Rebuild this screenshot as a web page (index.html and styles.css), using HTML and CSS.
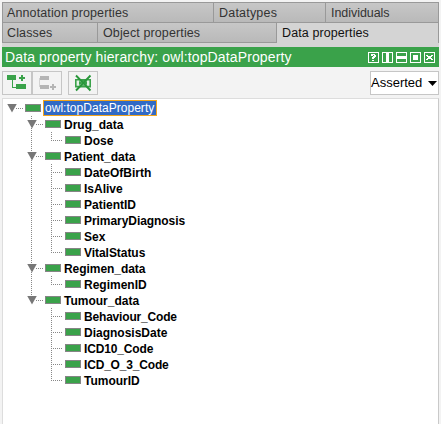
FILE: index.html
```html
<!DOCTYPE html>
<html lang="en">
<head><meta charset="utf-8"><title>Data properties</title><link rel="stylesheet" href="styles.css"></head>
<body>
<main class="window">
  <nav class="tabs">
    <div class="tab-row top"><span class="tab t1">Annotation properties</span><span class="tab t2">Datatypes</span><span class="tab t3">Individuals</span></div>
    <div class="tab-row bottom"><span class="tab t4">Classes</span><span class="tab t5">Object properties</span><span class="tab selected">Data properties</span></div>
  </nav>
  <header class="title"><span class="title-text">Data property hierarchy: owl:topDataProperty</span>
    <svg class="controls" width="67" height="11" viewBox="0 0 67 11" shape-rendering="crispEdges" fill="none" stroke="#fff">
      <path d="M.5.5h10v10H.5zM14.5.5h10v10h-10zM28.5.5h10v10h-10zM42.5.5h10v10h-10zM56.5.5h10v10h-10z"/>
      <path fill="#fff" stroke="none" d="M3 2h4v1h1v2H7v1H6v1H4V5h1V4h1V3H5v1H3zM4 8h2v1H4zM18 1h3v9h-3zM29 4h9v3h-9zM45 3h5v5h-5zM58 3h2v1h3V3h2v1h-1v1h-1v1h1v1h1v1h-2V7h-3v1h-2V7h1V6h1V5h-1V4h-1z"/>
    </svg>
  </header>
  <div class="toolbar">
    <button class="tool"><svg width="20" height="18" viewBox="0 0 20 18" shape-rendering="crispEdges"><path fill="#3aa24a" d="M0 1h9v5H0zM9 10h10v5H9zM5 6h1v7h3v1H5zM14 1h2v2h2v2h-2v2h-2V5h-2V3h2z"/></svg></button>
    <button class="tool add-sibling"><svg width="20" height="18" viewBox="0 0 20 18" shape-rendering="crispEdges"><path fill="#b5b5b5" d="M3 2h9v4H3zM3 11h9v4H3zM15 10h2v2h2v2h-2v2h-2v-2h-2v-2h2z"/><path fill="#d2d2d2" d="M2 4h1v9H2z"/></svg></button>
    <button class="tool remove"><svg width="20" height="18" viewBox="0 0 20 18"><path fill="#e5f2e7" stroke="#3aa24a" stroke-width="1.6" d="M2.800 5.800h14.400v6.800H2.800z"/><path fill="#3aa24a" d="M7 6l3 2 3-2zM7 13l3-2 3 2zM6 7l4 2-4 2zM14 7l-4 2 4 2z"/><path stroke="#28963a" stroke-width="1.900" d="M3 1.500l14.500 15M17.500 1.500L3 16.500"/></svg></button>
    <button class="select"><span>Asserted</span><svg width="9" height="5" viewBox="0 0 9 5"><path d="M0 0h9L4.500 5z"/></svg></button>
  </div>
  <section class="tree">
    <div class="row root"><i class="arrow"></i><i class="link"></i><i class="swatch"></i><span class="label">owl:topDataProperty</span></div>
    <div class="groups">
      <div class="row"><i class="arrow"></i><i class="link"></i><i class="swatch"></i><span class="label drug">Drug_data</span></div>
      <div class="children"><div class="row child"><i class="link"></i><i class="swatch"></i><span class="label dose">Dose</span></div></div>
      <div class="row"><i class="arrow"></i><i class="link"></i><i class="swatch"></i><span class="label patient">Patient_data</span></div>
      <div class="children">
        <div class="row child"><i class="link"></i><i class="swatch"></i><span class="label birth">DateOfBirth</span></div>
        <div class="row child"><i class="link"></i><i class="swatch"></i><span class="label alive">IsAlive</span></div>
        <div class="row child"><i class="link"></i><i class="swatch"></i><span class="label pid">PatientID</span></div>
        <div class="row child"><i class="link"></i><i class="swatch"></i><span class="label primary">PrimaryDiagnosis</span></div>
        <div class="row child"><i class="link"></i><i class="swatch"></i><span class="label sex">Sex</span></div>
        <div class="row child"><i class="link"></i><i class="swatch"></i><span class="label vital">VitalStatus</span></div>
      </div>
      <div class="row"><i class="arrow"></i><i class="link"></i><i class="swatch"></i><span class="label regimen">Regimen_data</span></div>
      <div class="children"><div class="row child"><i class="link"></i><i class="swatch"></i><span class="label rid">RegimenID</span></div></div>
      <div class="row"><i class="arrow"></i><i class="link"></i><i class="swatch"></i><span class="label tumour">Tumour_data</span></div>
      <div class="children">
        <div class="row child"><i class="link"></i><i class="swatch"></i><span class="label behaviour">Behaviour_Code</span></div>
        <div class="row child"><i class="link"></i><i class="swatch"></i><span class="label diagnosis">DiagnosisDate</span></div>
        <div class="row child"><i class="link"></i><i class="swatch"></i><span class="label icd10">ICD10_Code</span></div>
        <div class="row child"><i class="link"></i><i class="swatch"></i><span class="label icdo">ICD_O_3_Code</span></div>
        <div class="row child"><i class="link"></i><i class="swatch"></i><span class="label tid">TumourID</span></div>
      </div>
    </div>
  </section>
</main>
</body>
</html>
```
FILE: styles.css
```css
* { box-sizing: border-box; }
body { margin: 0; background: #f3f3f3; font-family: "Liberation Sans", Arial, sans-serif; color: #000; overflow: hidden; }
.window { width: 437px; height: 424px; margin-left: 2px; padding-top: 2px; display: flex; flex-direction: column; }
.tabs { height: 45px; background: #d4d4d4; border-top: 1px solid #999; }
.tab-row { display: flex; height: 20px; border-left: 1px solid #999; border-right: 1px solid #999; }
.tab { height: 20px; padding-left: 4px; background: linear-gradient(#c7c7c7, #b9b9b9); border-right: 1px solid #999; border-bottom: 1px solid #999; font-size: 12.5px; line-height: 20px; color: #333; white-space: nowrap; }
.top .tab:last-child, .selected { border-right: 0; }
.t1 { width: 211px; letter-spacing: .12px; }
.t2 { width: 112px; padding-left: 5px; letter-spacing: .2px; }
.t3 { flex: 1; padding-left: 5px; letter-spacing: -.05px; }
.t4 { width: 95px; letter-spacing: .15px; }
.t5 { width: 179px; padding-left: 5px; letter-spacing: .12px; }
.tab.selected { flex: 1; height: 24px; padding-left: 5px; background: #d4d4d4; border-bottom: 0; color: #111; letter-spacing: .1px; }
.title { height: 20px; flex: none; display: flex; align-items: center; justify-content: space-between; background: #3aa24a; color: #fff; padding: 0 4px 0 3px; }
.title-text { font-size: 14px; line-height: 20px; letter-spacing: .13px; white-space: nowrap; }
.controls { display: block; margin-top: 1px; }
.toolbar { height: 31px; padding-top: 4px; display: flex; flex: none; }
button { font: inherit; color: inherit; margin: 0; padding: 0; background: #f3f3f3; border: 1px solid #c6c6c6; }
.tool { width: 30px; height: 24px; display: flex; align-items: center; justify-content: center; }
.remove { margin-left: 6px; }
.select { width: 69px; height: 24px; margin-left: auto; background: #fff; font-size: 13px; display: flex; align-items: center; justify-content: space-between; padding: 0 1px 0 0; }
.select span { position: relative; top: -1px; }
.tree { flex: 1; background: #fff; border: 1px solid #c9c9c9; border-bottom: 0; border-left-color: #ddd; border-top-color: #ddd; padding: 1px 0 0 4px; }
.row { height: 16px; display: flex; align-items: center; }
.arrow { width: 10px; height: 9px; margin-right: -1px; flex: none; background: #777; clip-path: polygon(0 0, 100% 0, 50% 100%); }
.link { width: 7px; height: 1px; margin-right: 2px; flex: none; background: repeating-linear-gradient(90deg, #888 0 1px, transparent 1px 2px); }
.swatch { width: 16px; height: 8px; flex: none; background: #3aa24a; border: 1px solid #858585; }
.label { font-size: 12px; line-height: 16px; font-weight: 700; padding: 1px 0 0 3px; white-space: nowrap; }
.root .label { font-weight: 400; font-size: 12px; color: #fff; background: #316ac5; border: 1px solid #f3a51c; height: 16px; line-height: 15px; width: 114px; margin-left: 2px; padding: 0 0 0 1px; letter-spacing: .03px; }
.primary { letter-spacing: -.06px; }
.behaviour, .icdo { letter-spacing: -.18px; }
.icd10 { letter-spacing: -.15px; }
.vital, .regimen { letter-spacing: -.05px; }
.groups { margin-left: 20px; background: repeating-linear-gradient(#888 0 1px, transparent 1px 2px) 4px 0 / 1px 184px no-repeat; }
.children { margin-left: 24px; background: linear-gradient(#fff, #fff) 0 bottom / 1px 7px no-repeat, repeating-linear-gradient(#888 0 1px, transparent 1px 2px) 0 0 / 1px 100% no-repeat; }
.child .link { width: 12px; }
```
